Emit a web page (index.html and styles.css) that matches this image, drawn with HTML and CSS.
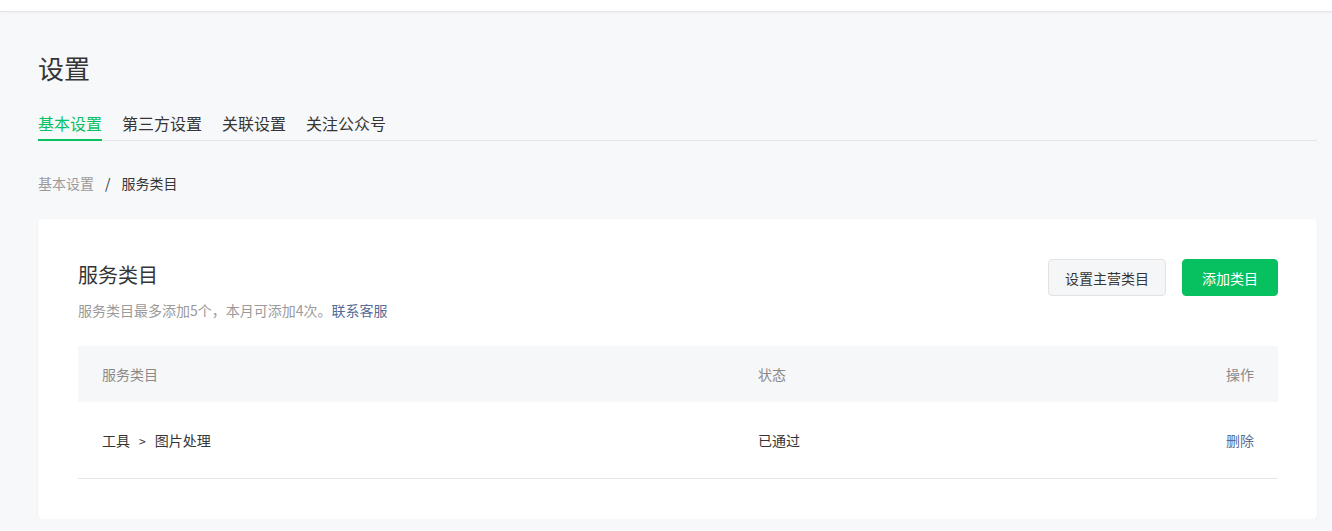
FILE: index.html
```html
<!DOCTYPE html>
<html lang="zh-CN">
<head>
<meta charset="utf-8">
<title>设置</title>
<link rel="stylesheet" href="styles.css">
</head>
<body>
<div class="topbar"></div>
<main class="main">
  <h1 class="page-title">设置</h1>
  <nav class="tabs">
    <a class="tab active">基本设置</a>
    <a class="tab">第三方设置</a>
    <a class="tab">关联设置</a>
    <a class="tab">关注公众号</a>
  </nav>
  <div class="crumbs">
    <span class="crumb-link">基本设置</span>
    <span class="crumb-sep">/</span>
    <span class="crumb-cur">服务类目</span>
  </div>
  <section class="card">
    <div class="card-head">
      <div class="card-info">
        <h2 class="card-title">服务类目</h2>
        <p class="card-desc">服务类目最多添加5个，本月可添加4次。<a class="link">联系客服</a></p>
      </div>
      <div class="card-actions">
        <button class="btn btn-default">设置主营类目</button>
        <button class="btn btn-primary">添加类目</button>
      </div>
    </div>
    <table class="table">
      <thead>
        <tr>
          <th class="col-name">服务类目</th>
          <th class="col-status">状态</th>
          <th class="col-op">操作</th>
        </tr>
      </thead>
      <tbody>
        <tr>
          <td class="col-name">工具<span class="gt">&gt;</span>图片处理</td>
          <td class="col-status">已通过</td>
          <td class="col-op"><a class="link">删除</a></td>
        </tr>
      </tbody>
    </table>
  </section>
</main>
</body>
</html>
```
FILE: styles.css
```css
* { box-sizing: border-box; }
html, body {
  margin: 0;
  padding: 0;
  background: #f7f8fa;
  font-family: "Noto Sans CJK SC", "Noto Sans", "Liberation Sans", sans-serif;
  color: #353535;
}
.topbar {
  height: 12px;
  background: #fff;
  border-bottom: 1px solid #e4e4e6;
  box-shadow: 0 1px 2px rgba(0,0,0,0.04);
}
.main {
  padding: 38px 15px 0 38px;
}
.page-title {
  margin: 0;
  font-size: 26px;
  font-weight: 400;
  line-height: 36px;
  color: #353535;
}
.tabs {
  display: flex;
  gap: 20px;
  margin-top: 25px;
  border-bottom: 1px solid #e3e4e6;
}
.tab {
  font-size: 16px;
  line-height: 24px;
  padding-bottom: 4px;
  color: #353535;
  border-bottom: 2px solid transparent;
  margin-bottom: -1px;
}
.tab.active {
  color: #07c160;
  border-bottom-color: #07c160;
}
.crumbs {
  display: flex;
  align-items: center;
  margin-top: 31px;
  font-size: 14px;
  line-height: 22px;
}
.crumb-link { color: #9a9a9a; }
.crumb-sep { color: #353535; margin: 0 11px 0 11px; }
.crumb-cur { color: #353535; }
.card {
  margin-top: 25px;
  background: #fff;
  border-radius: 4px;
  box-shadow: 0 1px 2px rgba(0,0,0,0.08);
  padding: 40px 39px 40px 40px;
}
.card-head {
  display: flex;
  justify-content: space-between;
  align-items: flex-start;
}
.card-title {
  margin: 0;
  font-size: 20px;
  font-weight: 400;
  line-height: 32px;
  color: #353535;
}
.card-desc {
  margin: 8px 0 0;
  font-size: 14px;
  line-height: 22px;
  color: #9a9a9a;
}
.link {
  color: #576b95;
  cursor: pointer;
}
.card-actions {
  display: flex;
  gap: 16px;
}
.btn {
  height: 37px;
  font-family: inherit;
  font-size: 14px;
  border-radius: 4px;
  padding: 0 16px;
  cursor: pointer;
}
.btn-default {
  background: #f5f6f7;
  border: 1px solid #e1e2e4;
  color: #353535;
  width: 118px;
}
.btn-primary {
  background: #07c160;
  border: 1px solid #07c160;
  color: #fff;
  width: 96px;
}
.table {
  width: 100%;
  margin-top: 25px;
  border-collapse: collapse;
  font-size: 14px;
}
.table th {
  background: #f6f7f9;
  height: 56px;
  font-weight: 400;
  color: #8c8a88;
  text-align: left;
  padding: 0 24px;
}
.table td {
  height: 76px;
  border-bottom: 1px solid #e7e7e7;
  text-align: left;
  padding: 0 24px;
  color: #353535;
}
.table .col-name { width: 656px; }
.table .col-op { text-align: right; }
.gt {
  margin: 0 9px;
  font-size: 12px;
}
```
